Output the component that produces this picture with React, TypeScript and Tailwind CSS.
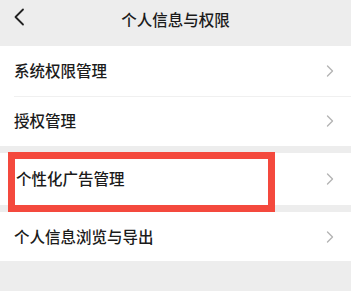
const font = { fontFamily: '"Noto Sans CJK SC", "Noto Sans", sans-serif' };

function Arrow() {
  return (
    <svg width="8" height="12" viewBox="0 0 8 12" fill="none" className="shrink-0">
      <path d="M1.5 1l5 5-5 5" stroke="#b4b4b4" strokeWidth="1.4" strokeLinecap="round" strokeLinejoin="round" />
    </svg>
  );
}

function Row({
  label,
  height,
  divider,
  indent = "pl-[14px]",
}: {
  label: string;
  height: string;
  divider?: boolean;
  indent?: string;
}) {
  return (
    <div className={`relative flex items-center bg-white ${height} ${indent} pr-[17px]`}>
      {divider && <div className="absolute left-[14px] right-0 top-0 h-px bg-[#f0f0f0]" />}
      <span className="flex-1 text-[15.5px] font-medium leading-none text-[#1b1b1b]">{label}</span>
      <Arrow />
    </div>
  );
}

export default function App() {
  return (
    <div className="relative h-[291px] w-[351px] overflow-hidden bg-[#ededed]" style={font}>
      <header className="relative flex h-[46px] items-start justify-center pt-[9px]">
        <svg
          width="12"
          height="18"
          viewBox="0 0 12 18"
          fill="none"
          className="absolute left-[13px] top-[8px]"
        >
          <path d="M10 1.5L2.5 9l7.5 7.5" stroke="#222" strokeWidth="1.8" strokeLinecap="round" strokeLinejoin="round" />
        </svg>
        <h1 className="text-[15.5px] font-medium leading-[20px] text-[#1b1b1b]">个人信息与权限</h1>
      </header>

      <Row label="系统权限管理" height="h-[50px]" />
      <Row label="授权管理" height="h-[50px]" divider />

      <div className="h-[7px]" />
      <div className="relative">
        <Row label="个性化广告管理" height="h-[52px]" indent="pl-[16px]" />
        <div className="pointer-events-none absolute left-[8px] top-[-1px] h-[60px] w-[267px] border-[7px] border-[#f4493d]" />
      </div>
      <div className="h-[7px]" />

      <Row label="个人信息浏览与导出" height="h-[49px]" />
    </div>
  );
}
